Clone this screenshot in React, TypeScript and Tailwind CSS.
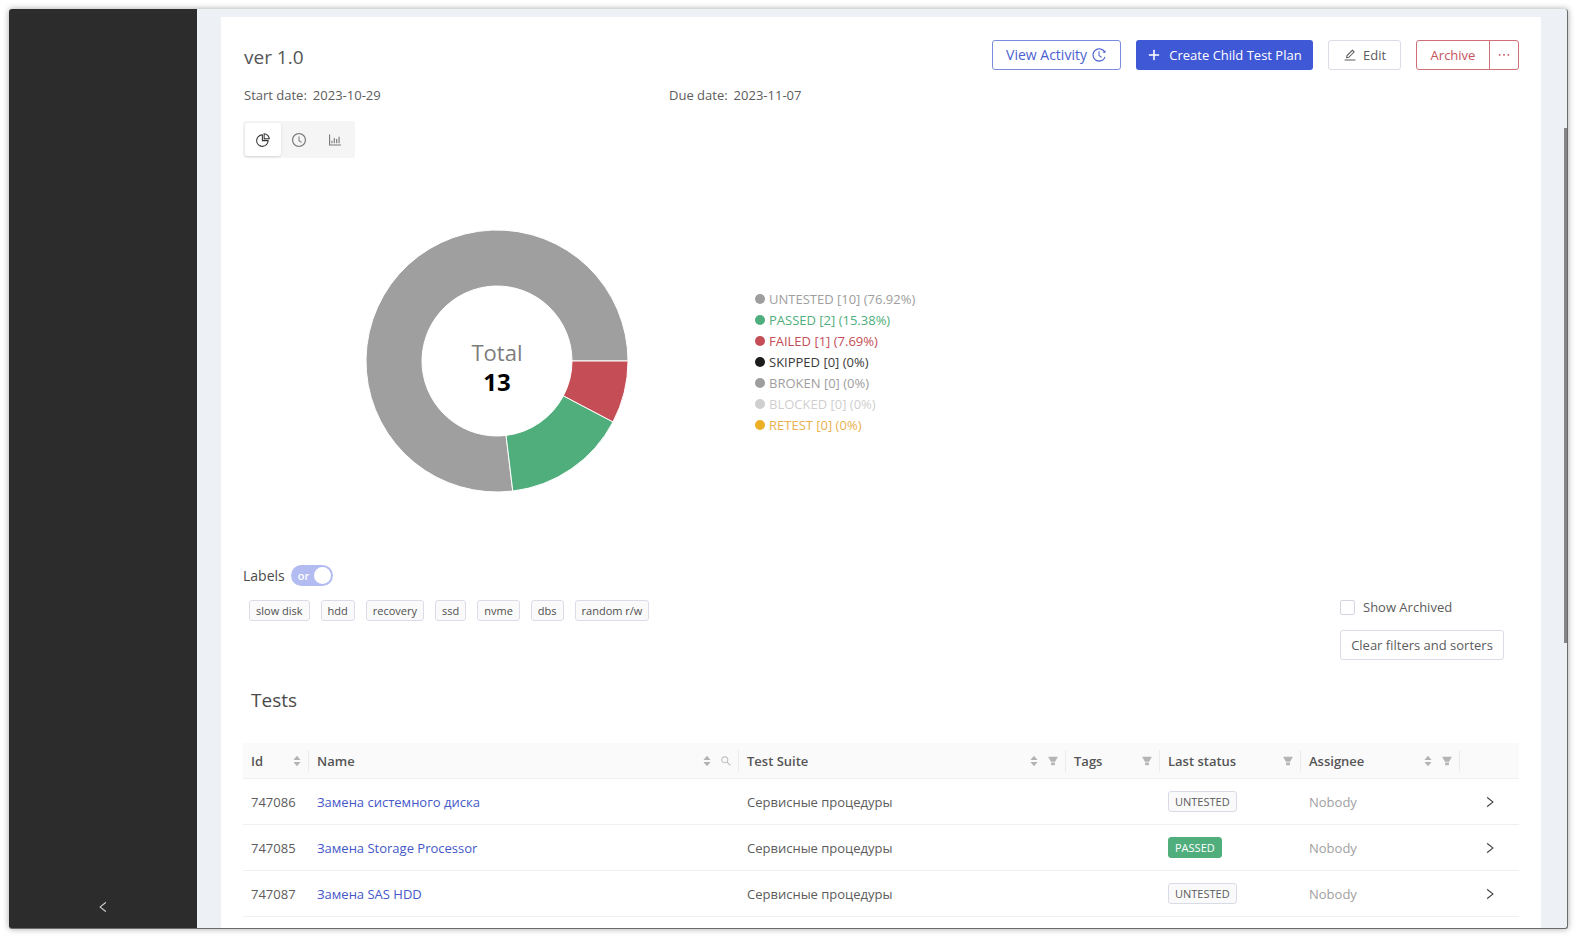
import { useState, type ReactNode } from "react";
import {
  AiFillCaretDown,
  AiFillCaretUp,
  AiFillFilter,
  AiOutlineBarChart,
  AiOutlineClockCircle,
  AiOutlineEdit,
  AiOutlineEllipsis,
  AiOutlineHistory,
  AiOutlineLeft,
  AiOutlinePieChart,
  AiOutlinePlus,
  AiOutlineRight,
  AiOutlineSearch,
} from "react-icons/ai";

const legend = [
  { label: "UNTESTED [10] (76.92%)", dot: "bg-[#9e9e9e]", text: "text-[#9e9e9e]" },
  { label: "PASSED [2] (15.38%)", dot: "bg-[#4fae7c]", text: "text-[#4fae7c]" },
  { label: "FAILED [1] (7.69%)", dot: "bg-[#c44d56]", text: "text-[#c44d56]" },
  { label: "SKIPPED [0] (0%)", dot: "bg-[#1c1c1c]", text: "text-[#3a3a3a]" },
  { label: "BROKEN [0] (0%)", dot: "bg-[#9e9e9e]", text: "text-[#9e9e9e]" },
  { label: "BLOCKED [0] (0%)", dot: "bg-[#cfcfcf]", text: "text-[#cfcfcf]" },
  { label: "RETEST [0] (0%)", dot: "bg-[#ebb025]", text: "text-[#e9b04e]" },
];

const labels = ["slow disk", "hdd", "recovery", "ssd", "nvme", "dbs", "random r/w"];

const tests = [
  { id: 747086, name: "Замена системного диска", suite: "Сервисные процедуры", status: "UNTESTED" },
  { id: 747085, name: "Замена Storage Processor", suite: "Сервисные процедуры", status: "PASSED" },
  { id: 747087, name: "Замена SAS HDD", suite: "Сервисные процедуры", status: "UNTESTED" },
];

const slices = [
  { value: 10, color: "#9f9f9f" },
  { value: 2, color: "#4fae7c" },
  { value: 1, color: "#c44d56" },
];

function slicePath(start: number, end: number, outer: number, inner: number) {
  const point = (r: number, a: number) =>
    `${(r * Math.cos(a)).toFixed(2)} ${(-r * Math.sin(a)).toFixed(2)}`;
  const large = end - start > Math.PI ? 1 : 0;
  return `M${point(outer, start)}A${outer} ${outer} 0 ${large} 0 ${point(outer, end)}L${point(inner, end)}A${inner} ${inner} 0 ${large} 1 ${point(inner, start)}Z`;
}

function Donut() {
  const total = slices.reduce((sum, s) => sum + s.value, 0);
  let angle = 0;
  return (
    <div className="relative shrink-0">
      <svg width="264" height="264" viewBox="-132 -132 264 264" aria-hidden="true">
        {slices.map((s) => {
          const start = angle;
          angle += (s.value / total) * Math.PI * 2;
          return (
            <path
              key={s.color}
              d={slicePath(start, angle, 131, 75)}
              fill={s.color}
              stroke="#ffffff"
              strokeWidth="1"
            />
          );
        })}
      </svg>
      <div className="absolute inset-0 flex flex-col items-center justify-center pt-3 text-center leading-[29px]">
        <span className="text-[22px] text-[#7d7d7d]">Total</span>
        <span className="text-[24px] font-bold text-black">{total}</span>
      </div>
    </div>
  );
}

function Sorter() {
  return (
    <button type="button" aria-label="Sort" className="flex flex-col items-center text-[10px] text-[#b3b3b3]">
      <AiFillCaretUp className="-mb-1" />
      <AiFillCaretDown />
    </button>
  );
}

function FilterButton() {
  return (
    <button type="button" aria-label="Filter" className="text-xs text-[#b5b5b5]">
      <AiFillFilter />
    </button>
  );
}

function HeaderCell({ title, last, children }: { title: string; last?: boolean; children?: ReactNode }) {
  return (
    <th scope="col" className="h-9 border-b border-[#f0f0f0] p-0 text-left font-semibold">
      <div
        className={
          last
            ? "h-[22px]"
            : "flex h-[22px] items-center justify-between border-r border-[#ececec] pr-[6px] pl-2"
        }
      >
        {title}
        <div className="flex items-center gap-2">{children}</div>
      </div>
    </th>
  );
}

function StatusTag({ status }: { status: string }) {
  const tone =
    status === "PASSED"
      ? "border-[#4fae7c] bg-[#4fae7c] text-white"
      : "border-[#d9dbe6] bg-[#fafafa] text-[#5a5a5a]";
  return (
    <span className={`inline-block h-[21px] rounded-[3px] border px-[6px] text-[11px] leading-[19px] ${tone}`}>
      {status}
    </span>
  );
}

export default function App() {
  const [view, setView] = useState(0);
  const [or, setOr] = useState(true);
  const views = [
    { label: "Pie chart", icon: <AiOutlinePieChart /> },
    { label: "Timeline", icon: <AiOutlineClockCircle /> },
    { label: "Histogram", icon: <AiOutlineBarChart /> },
  ];

  return (
    <div className="h-screen bg-white p-[9px] pb-2 font-['Open_Sans','Noto_Sans',sans-serif] text-[13px] leading-5 text-[#5c5c5c]">
      <div className="relative flex h-full overflow-hidden rounded-[3px] border-r border-b border-[#6b6b6b] bg-[#edf0f4] shadow-[0_0_6px_rgba(0,0,0,0.35)]">
        <aside className="flex w-[188px] shrink-0 flex-col justify-end bg-[#2c2c2c]">
          <button
            type="button"
            aria-label="Collapse sidebar"
            className="flex h-[43px] items-center justify-center text-sm text-[#d0d0d0]"
          >
            <AiOutlineLeft />
          </button>
        </aside>

        <main className="min-w-0 flex-1 overflow-hidden pt-2 pr-[26px] pl-6">
          <div className="min-h-full bg-white px-[22px] pt-[23px]">
            <header className="flex items-start justify-between">
              <h1 className="pt-1 pl-px text-[19px] leading-[26px] text-[#555555]">ver 1.0</h1>
              <div className="flex gap-[15px]">
                <button
                  type="button"
                  className="flex h-[30px] w-[129px] items-center justify-center gap-1 rounded-[3px] border border-[#7c8ce0] text-sm text-[#4a5fd0]"
                >
                  View Activity <AiOutlineHistory className="text-base" />
                </button>
                <button
                  type="button"
                  className="flex h-[30px] w-[177px] items-center justify-center gap-2 rounded-[3px] bg-[#3f58d6] text-white"
                >
                  <AiOutlinePlus className="text-sm" stroke="currentColor" strokeWidth="40" /> Create Child Test Plan
                </button>
                <button
                  type="button"
                  className="flex h-[30px] w-[73px] items-center justify-center gap-[6px] rounded-[3px] border border-[#dcdce8]"
                >
                  <AiOutlineEdit className="text-sm" /> Edit
                </button>
                <div className="flex h-[30px] rounded-[3px] border border-[#cf6f77] text-[#c4535c]">
                  <button type="button" className="w-[73px] border-r border-[#cf6f77]">
                    Archive
                  </button>
                  <button type="button" aria-label="More" className="flex w-7 items-center justify-center">
                    <AiOutlineEllipsis className="text-base" />
                  </button>
                </div>
              </div>
            </header>

            <dl className="mt-[15px] grid grid-cols-3 pl-px">
              <div className="flex gap-[6px]">
                <dt>Start date:</dt>
                <dd>2023-10-29</dd>
              </div>
              <div className="flex gap-[6px]">
                <dt>Due date:</dt>
                <dd>2023-11-07</dd>
              </div>
            </dl>

            <div className="mt-4 flex w-fit rounded-[3px] bg-[#f5f5f5] p-[2px]">
              {views.map((v, i) => (
                <button
                  key={v.label}
                  type="button"
                  aria-label={v.label}
                  aria-pressed={view === i}
                  onClick={() => setView(i)}
                  className={
                    view === i
                      ? "flex h-[33px] w-9 items-center justify-center rounded-[3px] bg-white text-base text-[#333333] shadow-sm"
                      : "flex h-[33px] w-9 items-center justify-center rounded-[3px] text-base text-[#7a7a7a]"
                  }
                >
                  {v.icon}
                </button>
              ))}
            </div>

            <section className="flex h-[405px] items-center gap-[126px] pl-[122px]">
              <Donut />
              <ul className="pt-[2px]">
                {legend.map((l) => (
                  <li key={l.label} className={`flex h-[21px] items-center gap-1 ${l.text}`}>
                    <span className={`mt-px size-[10px] rounded-full ${l.dot}`} />
                    {l.label}
                  </li>
                ))}
              </ul>
            </section>

            <section className="mt-[2px] flex justify-between">
              <div>
                <div className="flex items-center gap-[6px]">
                  <span id="labels-title" className="text-sm leading-[21px] font-medium text-[#4a4a4a]">
                    Labels
                  </span>
                  <button
                    type="button"
                    role="switch"
                    aria-checked={or}
                    aria-labelledby="labels-title"
                    onClick={() => setOr(!or)}
                    className="flex h-[21px] w-[42px] items-center justify-between rounded-full bg-[#b2bcf0] pr-[2px] pl-[7px] text-[11px] font-semibold text-white"
                  >
                    {or ? "or" : "and"}
                    <span className="size-[17px] rounded-full bg-white" />
                  </button>
                </div>
                <div className="mt-[14px] flex gap-[11px] pl-[6px]">
                  {labels.map((l) => (
                    <button
                      key={l}
                      type="button"
                      className="h-[21px] rounded-[3px] border border-[#dcdce8] bg-[#fafafa] px-[6px] text-[11px] leading-[19px] text-[#4f4f4f]"
                    >
                      {l}
                    </button>
                  ))}
                </div>
              </div>
              <div className="flex flex-col gap-[13px] pt-8 pr-[15px]">
                <label className="flex items-center gap-2">
                  <input
                    type="checkbox"
                    className="size-[15px] appearance-none rounded-[2px] border border-[#d5d5e0] bg-white checked:bg-[#3f58d6]"
                  />
                  Show Archived
                </label>
                <button type="button" className="h-[30px] w-[164px] rounded-[3px] border border-[#dcdce8]">
                  Clear filters and sorters
                </button>
              </div>
            </section>

            <h2 className="mt-[26px] pl-2 text-[19px] leading-7 text-[#4a4a4a]">Tests</h2>

            <table className="mt-[29px] w-full table-fixed border-separate border-spacing-0">
              <colgroup>
                <col className="w-[66px]" />
                <col />
                <col className="w-[327px]" />
                <col className="w-[94px]" />
                <col className="w-[141px]" />
                <col className="w-[159px]" />
                <col className="w-[59px]" />
              </colgroup>
              <thead className="bg-[#fafafa] text-[#555555]">
                <tr>
                  <HeaderCell title="Id">
                    <Sorter />
                  </HeaderCell>
                  <HeaderCell title="Name">
                    <Sorter />
                    <button type="button" aria-label="Search" className="text-xs text-[#b5b5b5]">
                      <AiOutlineSearch />
                    </button>
                  </HeaderCell>
                  <HeaderCell title="Test Suite">
                    <Sorter />
                    <FilterButton />
                  </HeaderCell>
                  <HeaderCell title="Tags">
                    <FilterButton />
                  </HeaderCell>
                  <HeaderCell title="Last status">
                    <FilterButton />
                  </HeaderCell>
                  <HeaderCell title="Assignee">
                    <Sorter />
                    <FilterButton />
                  </HeaderCell>
                  <HeaderCell title="" last />
                </tr>
              </thead>
              <tbody>
                {tests.map((t) => (
                  <tr key={t.id} className="h-[46px] *:border-b *:border-[#f0f0f0] *:px-2 *:py-0">
                    <td>{t.id}</td>
                    <td>
                      <a href="#" className="text-[#4458c8]">
                        {t.name}
                      </a>
                    </td>
                    <td>{t.suite}</td>
                    <td />
                    <td>
                      <StatusTag status={t.status} />
                    </td>
                    <td className="text-[#a0a0a0]">Nobody</td>
                    <td>
                      <button type="button" aria-label="Open test" className="mx-auto block text-sm text-[#3c3c3c]">
                        <AiOutlineRight />
                      </button>
                    </td>
                  </tr>
                ))}
              </tbody>
            </table>
          </div>
        </main>
        <div className="absolute top-[13%] right-0 h-[56%] w-[3px] bg-[#858585]" />
      </div>
    </div>
  );
}
